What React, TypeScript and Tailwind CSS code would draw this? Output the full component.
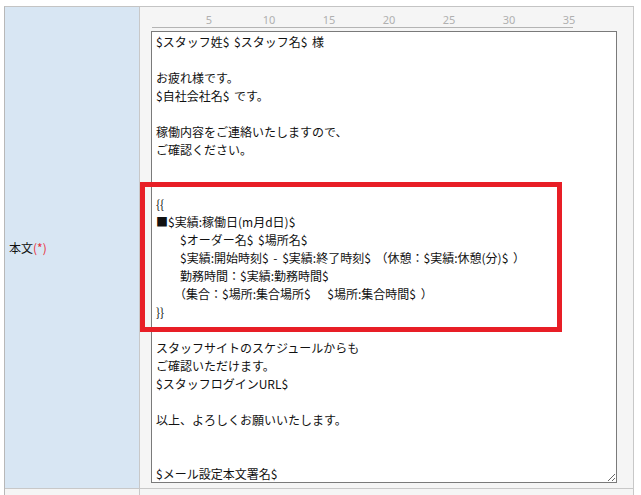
import React from "react";

const BODY = [
  "$スタッフ姓$ $スタッフ名$ 様",
  "",
  "お疲れ様です。",
  "$自社会社名$ です。",
  "",
  "稼働内容をご連絡いたしますので、",
  "ご確認ください。",
  "",
  "",
  "{{",
  "■$実績:稼働日(m月d日)$",
  "　　$オーダー名$ $場所名$",
  "　　$実績:開始時刻$ - $実績:終了時刻$ （休憩：$実績:休憩(分)$ ）",
  "　　勤務時間：$実績:勤務時間$",
  "　　（集合：$場所:集合場所$　 $場所:集合時間$ ）",
  "}}",
  "",
  "スタッフサイトのスケジュールからも",
  "ご確認いただけます。",
  "$スタッフログインURL$",
  "",
  "以上、よろしくお願いいたします。",
  "",
  "",
  "$メール設定本文署名$",
].join("\n");

const RULER = [5, 10, 15, 20, 25, 30, 35];

export default function App() {
  return (
    <div className="relative w-[641px] h-[495px] bg-white overflow-hidden font-['Noto_Sans_CJK_JP',sans-serif]">
      <div className="mt-[6px] ml-[4px] w-[630px] border-t border-l border-t-[#c4c4c4] border-l-[#b8b8b8]">
        <div className="flex border-b border-[#c8c8c8]">
          <div className="w-[135px] h-[481px] bg-[#d8e6f3] border-r border-[#c8c8c8] flex items-center pl-[4px]">
            <span className="text-[12px] leading-[16px] text-[#111]">
              本文<span className="text-[#e8303a]">(*)</span>
            </span>
          </div>
          <div className="w-[494px] h-[481px] bg-[#f5f5f5] border-r border-[#c8c8c8]">
            <div className="ml-[12px] w-[421px] h-[21px] border-b border-[#b4b4b4] pl-[3px] flex">
              {RULER.map((n) => (
                <div key={n} className="w-[60px] shrink-0 flex justify-end">
                  <div className="w-[12px] flex justify-center pt-[7px] text-[11px] leading-[12px] text-[#b0b0b0] font-['Noto_Sans',sans-serif] whitespace-nowrap">
                    {n}
                  </div>
                </div>
              ))}
            </div>
            <textarea
              readOnly
              value={BODY}
              className="block ml-[11px] mt-[3px] w-[466px] h-[452px] bg-white border border-[#7a7a7a] pt-[1px] pl-[4px] pr-[4px] text-[12px] leading-[18px] text-[#111] whitespace-pre overflow-hidden outline-none [word-spacing:2px] font-['Noto_Sans_CJK_JP',sans-serif]"
            />
          </div>
        </div>
        <div className="flex h-[10px]">
          <div className="w-[135px] bg-[#f5f5f5] border-r border-[#c8c8c8]" />
          <div className="w-[494px] bg-[#f5f5f5] border-r border-[#c8c8c8]" />
        </div>
      </div>
      <div className="absolute left-[140px] top-[182px] w-[422px] h-[150px] border-[5px] border-[#e81e26] pointer-events-none" />
    </div>
  );
}
